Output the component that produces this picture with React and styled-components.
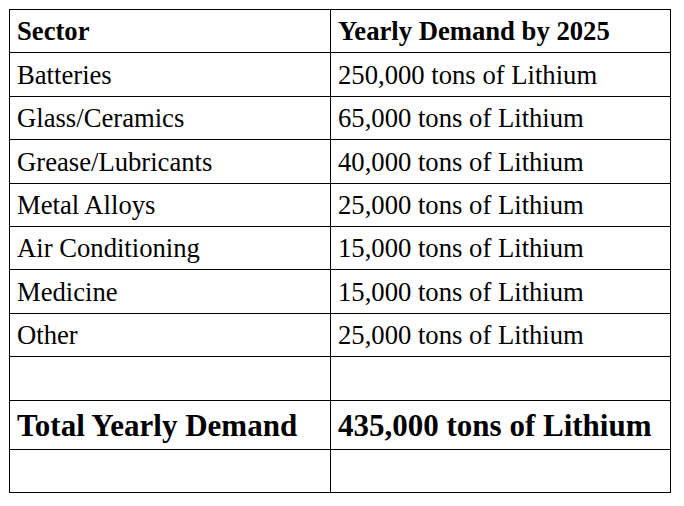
import React from 'react';
import styled, { createGlobalStyle } from 'styled-components';

const GlobalStyle = createGlobalStyle`
  body {
    margin: 0;
    background: #ffffff;
    font-family: "Liberation Serif", "Times New Roman", serif;
    color: #000000;
  }
`;

const Page = styled.div`
  padding: 9px 0 0 9px;
`;

const Table = styled.table`
  border-collapse: collapse;
  width: 662px;
  table-layout: fixed;
`;

const Row = styled.tr`
  height: ${(p) => (p.$tall ? '49px' : '43.4px')};
`;

const Cell = styled.td`
  box-sizing: border-box;
  border: 1px solid #000;
  padding: 1px 7px 0;
  vertical-align: middle;
  font-size: ${(p) => (p.$total ? '31px' : '26.67px')};
  font-weight: ${(p) => (p.$bold || p.$total ? 700 : 400)};
  line-height: 1;
  white-space: nowrap;
  width: ${(p) => (p.$first ? '321px' : 'auto')};
`;

const data = [
  ['Batteries', '250,000 tons of Lithium'],
  ['Glass/Ceramics', '65,000 tons of Lithium'],
  ['Grease/Lubricants', '40,000 tons of Lithium'],
  ['Metal Alloys', '25,000 tons of Lithium'],
  ['Air Conditioning', '15,000 tons of Lithium'],
  ['Medicine', '15,000 tons of Lithium'],
  ['Other', '25,000 tons of Lithium'],
];

export default function App() {
  return (
    <Page>
      <GlobalStyle />
      <Table>
        <tbody>
          <Row>
            <Cell $first $bold>Sector</Cell>
            <Cell $bold>Yearly Demand by 2025</Cell>
          </Row>
          {data.map(([sector, amount]) => (
            <Row key={sector}>
              <Cell $first>{sector}</Cell>
              <Cell>{amount}</Cell>
            </Row>
          ))}
          <Row>
            <Cell $first />
            <Cell />
          </Row>
          <Row $tall>
            <Cell $first $total>Total Yearly Demand</Cell>
            <Cell $total>435,000 tons of Lithium</Cell>
          </Row>
          <Row>
            <Cell $first />
            <Cell />
          </Row>
        </tbody>
      </Table>
    </Page>
  );
}
